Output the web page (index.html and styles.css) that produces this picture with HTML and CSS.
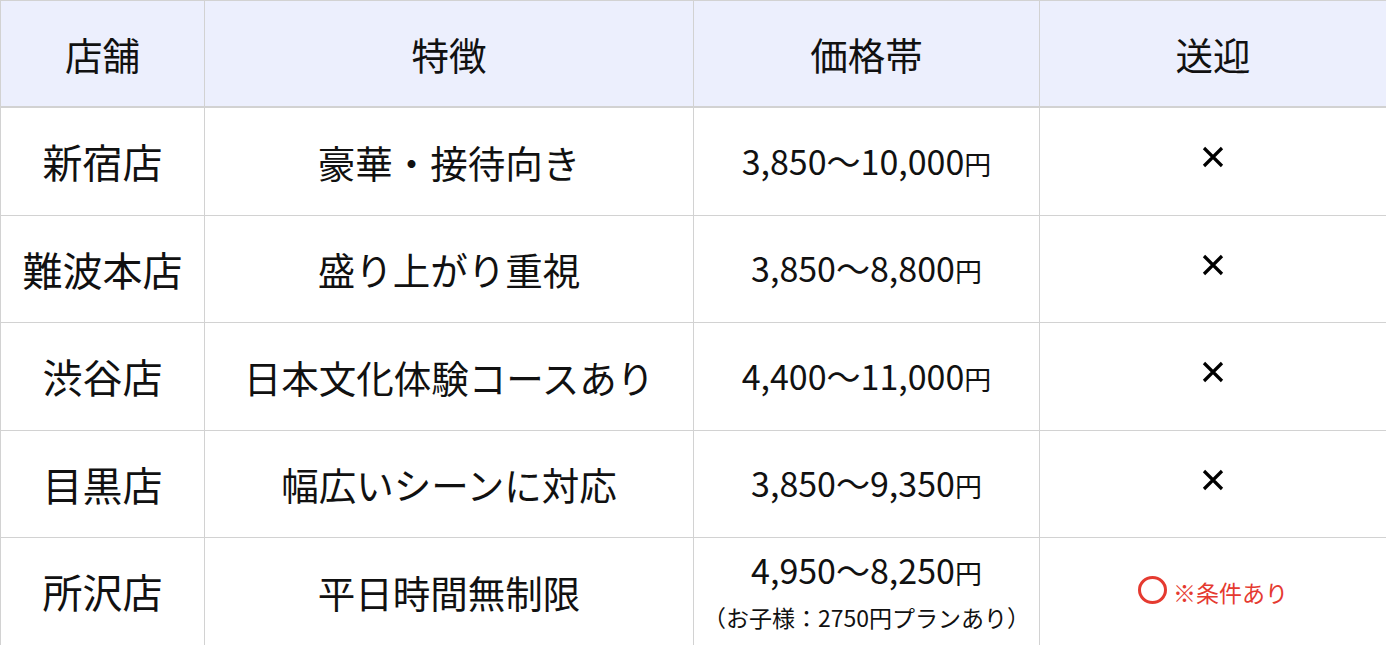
FILE: index.html
```html
<!DOCTYPE html>
<html lang="ja">
<head>
<meta charset="utf-8">
<link rel="stylesheet" href="styles.css">
</head>
<body>
<table class="shops">
  <colgroup>
    <col class="c1"><col class="c2"><col class="c3"><col class="c4">
  </colgroup>
  <thead>
    <tr><th>店舗</th><th>特徴</th><th>価格帯</th><th>送迎</th></tr>
  </thead>
  <tbody>
    <tr><td class="name">新宿店</td><td>豪華・接待向き</td><td class="price">3,850〜10,000<span class="yen">円</span></td><td class="mark"><svg class="x" viewBox="0 0 22 22" width="22" height="22"><path d="M2 2L20 20M20 2L2 20" stroke="#000" stroke-width="3.2" fill="none"/></svg></td></tr>
    <tr><td class="name">難波本店</td><td>盛り上がり重視</td><td class="price">3,850〜8,800<span class="yen">円</span></td><td class="mark"><svg class="x" viewBox="0 0 22 22" width="22" height="22"><path d="M2 2L20 20M20 2L2 20" stroke="#000" stroke-width="3.2" fill="none"/></svg></td></tr>
    <tr><td class="name">渋谷店</td><td>日本文化体験コースあり</td><td class="price">4,400〜11,000<span class="yen">円</span></td><td class="mark"><svg class="x" viewBox="0 0 22 22" width="22" height="22"><path d="M2 2L20 20M20 2L2 20" stroke="#000" stroke-width="3.2" fill="none"/></svg></td></tr>
    <tr><td class="name">目黒店</td><td>幅広いシーンに対応</td><td class="price">3,850〜9,350<span class="yen">円</span></td><td class="mark"><svg class="x" viewBox="0 0 22 22" width="22" height="22"><path d="M2 2L20 20M20 2L2 20" stroke="#000" stroke-width="3.2" fill="none"/></svg></td></tr>
    <tr><td class="name">所沢店</td><td>平日時間無制限</td><td class="price"><div class="pline">4,950〜8,250<span class="yen">円</span></div><div class="note">（お子様：2750円プランあり）</div></td><td class="cond"><span class="circle"></span><span class="ctext">※条件あり</span></td></tr>
  </tbody>
</table>
</body>
</html>
```
FILE: styles.css
```css
html, body { margin: 0; padding: 0; background: #fff; }
body { font-family: "Noto Sans CJK JP", "Noto Sans", sans-serif; color: #111; }
.shops { border-collapse: collapse; width: 1386px; table-layout: fixed; }
.c1 { width: 204px; }
.c2 { width: 489px; }
.c3 { width: 346px; }
.c4 { width: 347px; }
.shops th, .shops td { border: 1px solid #d2d2d2; text-align: center; vertical-align: middle; padding: 0; font-weight: 400; font-size: 37.5px; line-height: 1.2; }
.shops thead th { background: #eceffd; height: 105px; border-bottom: 2px solid #d2d2d2; }
.shops tbody td { height: 106.5px; }
.shops td.name { font-size: 40px; }
.shops td.price { font-size: 34px; }
.yen { font-size: 27px; }
.pline { line-height: 1.2; margin-top: 0; }
.note { font-size: 23px; line-height: 1.3; margin-top: 12px; }
.shops td.mark { font-size: 0; line-height: 0; }
.x { display: inline-block; margin-top: -8px; }
.shops td.cond { color: #e53a30; font-size: 23px; }
.circle { display: inline-block; width: 29px; height: 28px; border: 3px solid #e53a30; border-radius: 50%; box-sizing: border-box; vertical-align: -5px; margin-right: 6px; }
.ctext { vertical-align: middle; }
```
